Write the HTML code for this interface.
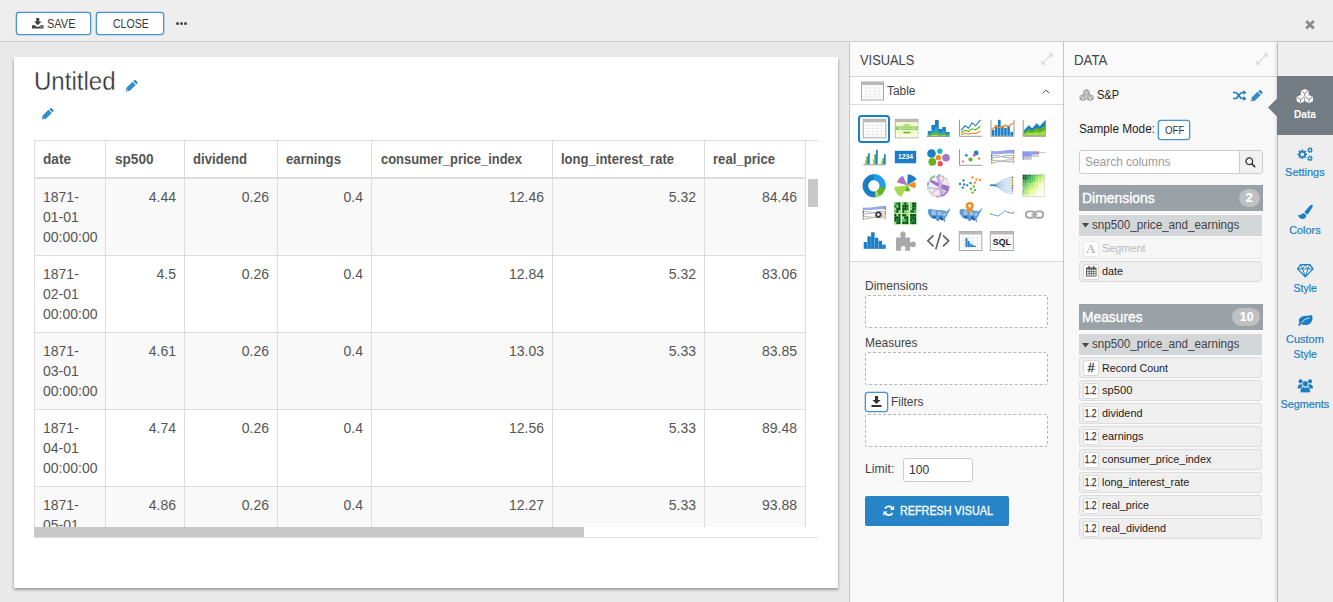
<!DOCTYPE html>
<html lang="en">
<head>
<meta charset="utf-8">
<title>Untitled</title>
<style>
*{box-sizing:border-box;margin:0;padding:0}
html,body{width:1333px;height:602px;overflow:hidden}
body{font-family:"Liberation Sans",sans-serif;font-size:13px;color:#333;background:#e9e9e9;position:relative}
.t{position:absolute;white-space:pre;display:block}
.b{position:absolute;display:block}
svg{position:absolute;display:block;overflow:visible}
#topbar{position:absolute;left:0;top:0;width:1333px;height:42px;background:#eeeeee;border-bottom:1px solid #cdcdcd}
.btn{position:absolute;border:1px solid #4693d0;border-radius:3px;background:#fff;box-shadow:0 0 0 .3px #4693d0}
#card{position:absolute;left:14px;top:57px;width:824px;height:531px;background:#fff;box-shadow:0 1.5px 3px rgba(0,0,0,.42)}
.panel{position:absolute;top:42px;height:560px;background:#f8f8f8;border-left:1px solid #c6c6c6}
.phead{position:absolute;left:0;top:0;width:213px;height:35px;background:#fafafa;border-bottom:1px solid #d6d6d6}
.drop{position:absolute;left:865px;width:183px;background:#fff;border:1px dashed #b5b5b5;border-radius:3px}
.sec{position:absolute;left:1079px;width:184px;height:26px;background:#9aa1a7}
.grp{position:absolute;left:1079px;width:183px;height:20.5px;background:#d3d7da}
.item{position:absolute;left:1079px;width:183px;height:21px;background:#efefef;border:1px solid #dcdcdc;border-radius:3px}
.ibox{position:absolute;left:1083px;width:16px;height:16.5px;background:#fff;border:1px solid #d8d8d8;border-radius:2px}
.pill{position:absolute;height:18px;border-radius:9px;background:#bfc0c0}
</style>
</head>
<body>

<div id="topbar"></div>
<div class="btn" style="left:16px;top:12px;width:75px;height:23px"></div>
<div class="btn" style="left:96px;top:12px;width:68px;height:23px"></div>
<svg style="left:32px;top:18px" width="11.5" height="10.5" viewBox="0 0 23 21"><path fill="#404040" d="M8.5 0h6v7h4.5l-7.5 7.5L4 7h4.5zM0 14.5h6l3 3h5l3-3h6V21H0z"/><rect x="15.5" y="17" width="2" height="1.6" fill="#fff"/><rect x="19" y="17" width="2" height="1.6" fill="#fff"/></svg>
<span class="t" style="left:46.50px;top:18px;font-size:12px;line-height:12px;color:#3a3a3a;transform:scaleX(0.9156);transform-origin:0 0;">SAVE</span>
<span class="t" style="left:112.50px;top:18px;font-size:12px;line-height:12px;color:#3a3a3a;transform:scaleX(0.8775);transform-origin:0 0;">CLOSE</span>
<div class="b" style="left:175.8px;top:22px;width:3.2px;height:3.2px;border-radius:50%;background:#444"></div>
<div class="b" style="left:180.0px;top:22px;width:3.2px;height:3.2px;border-radius:50%;background:#444"></div>
<div class="b" style="left:184.2px;top:22px;width:3.2px;height:3.2px;border-radius:50%;background:#444"></div>
<svg style="left:1304.5px;top:20px" width="10" height="9.5" viewBox="0 0 10 10"><path d="M1 1L9 9M9 1L1 9" stroke="#8c8c8c" stroke-width="2.900"/></svg>
<div id="card"></div>
<span class="t" style="left:33.60px;top:69px;font-size:25px;line-height:25px;color:#333;transform:scaleX(0.9615);transform-origin:0 0;-webkit-text-stroke:.28px #fff;">Untitled</span>
<svg style="left:125.6px;top:80px" width="11.5" height="11.5" viewBox="0 0 11 11"><path fill="#1b7fc5" d="M0 11l.6-3.6L6.300 1.700l3 3L3.600 10.400zM7 1l1-.8a.9.9 0 0 1 1.200 0L10.800 1.800a.9.9 0 0 1 0 1.200l-.8 1z"/><path d="M1.700 8.300L7.300 2.700M2.700 9.300L8.300 3.700" stroke="#fff" stroke-width=".45" opacity=".55"/><path d="M.95 8.500L2.500 10.050 .75 10.300z" fill="#fff" opacity=".7"/></svg>
<svg style="left:41.9px;top:108px" width="11.5" height="11.5" viewBox="0 0 11 11"><path fill="#1b7fc5" d="M0 11l.6-3.6L6.300 1.700l3 3L3.600 10.400zM7 1l1-.8a.9.9 0 0 1 1.200 0L10.800 1.800a.9.9 0 0 1 0 1.200l-.8 1z"/><path d="M1.700 8.300L7.300 2.700M2.700 9.300L8.300 3.700" stroke="#fff" stroke-width=".45" opacity=".55"/><path d="M.95 8.500L2.500 10.050 .75 10.300z" fill="#fff" opacity=".7"/></svg>
<div class="b" style="left:34px;top:140px;width:784px;height:1px;background:#ddd"></div>
<div class="b" style="left:34px;top:177px;width:772px;height:2px;background:#ddd"></div>
<div class="b" style="left:34px;top:179px;width:784px;height:348px;overflow:hidden">
<div class="b" style="left:0;top:0px;width:772px;height:76px;background:#f9f9f9"></div>
<div class="b" style="left:0;top:76px;width:774px;height:1px;background:#ddd"></div>
<span class="t" style="left:9.00px;top:11px;font-size:14px;line-height:14px;color:#555;">1871-</span>
<span class="t" style="left:9.00px;top:31px;font-size:14px;line-height:14px;color:#555;">01-01</span>
<span class="t" style="left:9.00px;top:51px;font-size:14px;line-height:14px;color:#555;">00:00:00</span>
<span class="t" style="left:114.75px;top:11px;font-size:14px;line-height:14px;color:#555;">4.44</span>
<span class="t" style="left:207.75px;top:11px;font-size:14px;line-height:14px;color:#555;">0.26</span>
<span class="t" style="left:309.54px;top:11px;font-size:14px;line-height:14px;color:#555;">0.4</span>
<span class="t" style="left:474.97px;top:11px;font-size:14px;line-height:14px;color:#555;">12.46</span>
<span class="t" style="left:634.75px;top:11px;font-size:14px;line-height:14px;color:#555;">5.32</span>
<span class="t" style="left:727.97px;top:11px;font-size:14px;line-height:14px;color:#555;">84.46</span>
<div class="b" style="left:0;top:77px;width:772px;height:76px;background:#fff"></div>
<div class="b" style="left:0;top:153px;width:774px;height:1px;background:#ddd"></div>
<span class="t" style="left:9.00px;top:88px;font-size:14px;line-height:14px;color:#555;">1871-</span>
<span class="t" style="left:9.00px;top:108px;font-size:14px;line-height:14px;color:#555;">02-01</span>
<span class="t" style="left:9.00px;top:128px;font-size:14px;line-height:14px;color:#555;">00:00:00</span>
<span class="t" style="left:122.54px;top:88px;font-size:14px;line-height:14px;color:#555;">4.5</span>
<span class="t" style="left:207.75px;top:88px;font-size:14px;line-height:14px;color:#555;">0.26</span>
<span class="t" style="left:309.54px;top:88px;font-size:14px;line-height:14px;color:#555;">0.4</span>
<span class="t" style="left:474.97px;top:88px;font-size:14px;line-height:14px;color:#555;">12.84</span>
<span class="t" style="left:634.75px;top:88px;font-size:14px;line-height:14px;color:#555;">5.32</span>
<span class="t" style="left:727.97px;top:88px;font-size:14px;line-height:14px;color:#555;">83.06</span>
<div class="b" style="left:0;top:154px;width:772px;height:76px;background:#f9f9f9"></div>
<div class="b" style="left:0;top:230px;width:774px;height:1px;background:#ddd"></div>
<span class="t" style="left:9.00px;top:165px;font-size:14px;line-height:14px;color:#555;">1871-</span>
<span class="t" style="left:9.00px;top:185px;font-size:14px;line-height:14px;color:#555;">03-01</span>
<span class="t" style="left:9.00px;top:205px;font-size:14px;line-height:14px;color:#555;">00:00:00</span>
<span class="t" style="left:114.75px;top:165px;font-size:14px;line-height:14px;color:#555;">4.61</span>
<span class="t" style="left:207.75px;top:165px;font-size:14px;line-height:14px;color:#555;">0.26</span>
<span class="t" style="left:309.54px;top:165px;font-size:14px;line-height:14px;color:#555;">0.4</span>
<span class="t" style="left:474.97px;top:165px;font-size:14px;line-height:14px;color:#555;">13.03</span>
<span class="t" style="left:634.75px;top:165px;font-size:14px;line-height:14px;color:#555;">5.33</span>
<span class="t" style="left:727.97px;top:165px;font-size:14px;line-height:14px;color:#555;">83.85</span>
<div class="b" style="left:0;top:231px;width:772px;height:76px;background:#fff"></div>
<div class="b" style="left:0;top:307px;width:774px;height:1px;background:#ddd"></div>
<span class="t" style="left:9.00px;top:242px;font-size:14px;line-height:14px;color:#555;">1871-</span>
<span class="t" style="left:9.00px;top:262px;font-size:14px;line-height:14px;color:#555;">04-01</span>
<span class="t" style="left:9.00px;top:282px;font-size:14px;line-height:14px;color:#555;">00:00:00</span>
<span class="t" style="left:114.75px;top:242px;font-size:14px;line-height:14px;color:#555;">4.74</span>
<span class="t" style="left:207.75px;top:242px;font-size:14px;line-height:14px;color:#555;">0.26</span>
<span class="t" style="left:309.54px;top:242px;font-size:14px;line-height:14px;color:#555;">0.4</span>
<span class="t" style="left:474.97px;top:242px;font-size:14px;line-height:14px;color:#555;">12.56</span>
<span class="t" style="left:634.75px;top:242px;font-size:14px;line-height:14px;color:#555;">5.33</span>
<span class="t" style="left:727.97px;top:242px;font-size:14px;line-height:14px;color:#555;">89.48</span>
<div class="b" style="left:0;top:308px;width:772px;height:76px;background:#f9f9f9"></div>
<div class="b" style="left:0;top:384px;width:774px;height:1px;background:#ddd"></div>
<span class="t" style="left:9.00px;top:319px;font-size:14px;line-height:14px;color:#555;">1871-</span>
<span class="t" style="left:9.00px;top:339px;font-size:14px;line-height:14px;color:#555;">05-01</span>
<span class="t" style="left:9.00px;top:359px;font-size:14px;line-height:14px;color:#555;">00:00:00</span>
<span class="t" style="left:114.75px;top:319px;font-size:14px;line-height:14px;color:#555;">4.86</span>
<span class="t" style="left:207.75px;top:319px;font-size:14px;line-height:14px;color:#555;">0.26</span>
<span class="t" style="left:309.54px;top:319px;font-size:14px;line-height:14px;color:#555;">0.4</span>
<span class="t" style="left:474.97px;top:319px;font-size:14px;line-height:14px;color:#555;">12.27</span>
<span class="t" style="left:634.75px;top:319px;font-size:14px;line-height:14px;color:#555;">5.33</span>
<span class="t" style="left:727.97px;top:319px;font-size:14px;line-height:14px;color:#555;">93.88</span>
</div>
<div class="b" style="left:34px;top:140px;width:1px;height:387px;background:#ddd"></div>
<div class="b" style="left:105px;top:140px;width:1px;height:387px;background:#ddd"></div>
<div class="b" style="left:184px;top:140px;width:1px;height:387px;background:#ddd"></div>
<div class="b" style="left:277px;top:140px;width:1px;height:387px;background:#ddd"></div>
<div class="b" style="left:371px;top:140px;width:1px;height:387px;background:#ddd"></div>
<div class="b" style="left:552px;top:140px;width:1px;height:387px;background:#ddd"></div>
<div class="b" style="left:704px;top:140px;width:1px;height:387px;background:#ddd"></div>
<div class="b" style="left:805px;top:140px;width:1px;height:387px;background:#ddd"></div>
<span class="t" style="left:43.30px;top:152px;font-size:14px;line-height:14px;color:#555;font-weight:700;transform:scaleX(0.9726);transform-origin:0 0;">date</span>
<span class="t" style="left:115.20px;top:152px;font-size:14px;line-height:14px;color:#555;font-weight:700;transform:scaleX(0.9698);transform-origin:0 0;">sp500</span>
<span class="t" style="left:193.30px;top:152px;font-size:14px;line-height:14px;color:#555;font-weight:700;transform:scaleX(0.9382);transform-origin:0 0;">dividend</span>
<span class="t" style="left:286.30px;top:152px;font-size:14px;line-height:14px;color:#555;font-weight:700;transform:scaleX(0.9425);transform-origin:0 0;">earnings</span>
<span class="t" style="left:381.00px;top:152px;font-size:14px;line-height:14px;color:#555;font-weight:700;transform:scaleX(0.9245);transform-origin:0 0;">consumer_price_index</span>
<span class="t" style="left:561.30px;top:152px;font-size:14px;line-height:14px;color:#555;font-weight:700;transform:scaleX(0.9310);transform-origin:0 0;">long_interest_rate</span>
<span class="t" style="left:713.30px;top:152px;font-size:14px;line-height:14px;color:#555;font-weight:700;transform:scaleX(0.9371);transform-origin:0 0;">real_price</span>
<div class="b" style="left:806px;top:179px;width:12px;height:348px;background:#fff"></div>
<div class="b" style="left:808px;top:179px;width:10px;height:28px;background:#c8c8c8"></div>
<div class="b" style="left:34px;top:527px;width:784px;height:10px;background:#fff"></div>
<div class="b" style="left:34px;top:527px;width:549.5px;height:10px;background:#c8c8c8"></div>
<div class="b" style="left:34px;top:537px;width:784px;height:1px;background:#ddd"></div>
<div class="panel" style="left:849px;width:215px"><div class="phead"></div></div>
<div class="b" style="left:850px;top:77px;width:213px;height:184px;background:#fff"></div>
<div class="b" style="left:850px;top:104px;width:213px;height:1px;background:#dcdcdc"></div>
<div class="b" style="left:850px;top:261px;width:213px;height:1px;background:#d6d6d6"></div>
<span class="t" style="left:859.80px;top:53px;font-size:14px;line-height:14px;color:#444;transform:scaleX(0.9182);transform-origin:0 0;">VISUALS</span>
<svg style="left:1041px;top:53px" width="12" height="12" viewBox="0 0 12 12"><path d="M2 10L10 2" stroke="#dadada" stroke-width="1.100" fill="none"/><path fill="#dadada" d="M7.200 .3H11.700v4.500zM.3 7.200V11.700h4.500z"/></svg>
<svg style="left:0;top:0" width="1333" height="602" viewBox="0 0 1333 602"><g transform="translate(861.5,82)"><rect x="0" y="0" width="22" height="18" fill="#fff" stroke="#a8a8a8" stroke-width="1"/><rect x="0" y="0" width="22" height="3" fill="#b9b9b9"/><path d="M1 6.00H21" stroke="#e3e3e3" stroke-width=".6"/><path d="M1 9.00H21" stroke="#e3e3e3" stroke-width=".6"/><path d="M1 12.00H21" stroke="#e3e3e3" stroke-width=".6"/><path d="M1 15.00H21" stroke="#e3e3e3" stroke-width=".6"/><path d="M4.40 3V17.5" stroke="#e3e3e3" stroke-width=".6"/><path d="M8.80 3V17.5" stroke="#e3e3e3" stroke-width=".6"/><path d="M13.20 3V17.5" stroke="#e3e3e3" stroke-width=".6"/><path d="M17.60 3V17.5" stroke="#e3e3e3" stroke-width=".6"/></g><rect x="859" y="116" width="30" height="26" rx="2.5" fill="#fff" stroke="#1b7fc5" stroke-width="2"/><g transform="translate(863.3,119.3)"><rect x="0" y="0" width="22.5" height="18.5" fill="#fff" stroke="#a8a8a8" stroke-width="1"/><rect x="0" y="0" width="22.5" height="3" fill="#b9b9b9"/><path d="M1 6.10H21.5" stroke="#e3e3e3" stroke-width=".6"/><path d="M1 9.20H21.5" stroke="#e3e3e3" stroke-width=".6"/><path d="M1 12.30H21.5" stroke="#e3e3e3" stroke-width=".6"/><path d="M1 15.40H21.5" stroke="#e3e3e3" stroke-width=".6"/><path d="M4.50 3V18.0" stroke="#e3e3e3" stroke-width=".6"/><path d="M9.00 3V18.0" stroke="#e3e3e3" stroke-width=".6"/><path d="M13.50 3V18.0" stroke="#e3e3e3" stroke-width=".6"/><path d="M18.00 3V18.0" stroke="#e3e3e3" stroke-width=".6"/></g><g transform="translate(895.3,119.3)"><rect width="22.500" height="18.5" fill="#fff" stroke="#a8a8a8"/><rect width="22.500" height="3" fill="#b9b9b9"/><rect x=".5" y="3.2" width="22" height="3.600" fill="#f7f9c8"/><rect x=".5" y="7" width="22" height="4" fill="#8fd16a"/><rect x=".5" y="11.200" width="22" height="3.600" fill="#f7f9c8"/><rect x=".5" y="15" width="22" height="3" fill="#fbfce0"/><rect x="8" y="5" width="7" height="1.500" fill="#a6dc4b"/><rect x="8" y="12.500" width="7" height="1.500" fill="#62b51f"/><rect x="3" y="8.300" width="17" height="1.300" fill="#b9e58a"/><path d="M4.500 3V18M18.500 3V18" stroke="#e4e4e4" stroke-width=".7"/></g><g transform="translate(927,120)"><rect x="0.8" y="11" width="3.700" height="5" fill="#1b7fc5"/><rect x="0.8" y="13.25" width="3.700" height="1.25" fill="#1ea0ef"/><rect x="0.8" y="14.50" width="3.700" height="1.00" fill="#62b51f"/><rect x="0.8" y="15.50" width="3.700" height="0.50" fill="#a6dc4b"/><rect x="4.4" y="5" width="3.700" height="11" fill="#1b7fc5"/><rect x="4.4" y="9.95" width="3.700" height="2.75" fill="#1ea0ef"/><rect x="4.4" y="12.70" width="3.700" height="2.20" fill="#62b51f"/><rect x="4.4" y="14.90" width="3.700" height="1.10" fill="#a6dc4b"/><rect x="8" y="0" width="3.700" height="16" fill="#1b7fc5"/><rect x="8" y="7.20" width="3.700" height="4.00" fill="#1ea0ef"/><rect x="8" y="11.20" width="3.700" height="3.20" fill="#62b51f"/><rect x="8" y="14.40" width="3.700" height="1.60" fill="#a6dc4b"/><rect x="11.6" y="9" width="3.700" height="7" fill="#1b7fc5"/><rect x="11.6" y="12.15" width="3.700" height="1.75" fill="#1ea0ef"/><rect x="11.6" y="13.90" width="3.700" height="1.40" fill="#62b51f"/><rect x="11.6" y="15.30" width="3.700" height="0.70" fill="#a6dc4b"/><rect x="15.2" y="7" width="3.700" height="9" fill="#1b7fc5"/><rect x="15.2" y="11.05" width="3.700" height="2.25" fill="#1ea0ef"/><rect x="15.2" y="13.30" width="3.700" height="1.80" fill="#62b51f"/><rect x="15.2" y="15.10" width="3.700" height="0.90" fill="#a6dc4b"/><rect x="18.8" y="12" width="3.700" height="4" fill="#1b7fc5"/><rect x="18.8" y="13.80" width="3.700" height="1.00" fill="#1ea0ef"/><rect x="18.8" y="14.80" width="3.700" height="0.80" fill="#62b51f"/><rect x="18.8" y="15.60" width="3.700" height="0.40" fill="#a6dc4b"/><path d="M0 16.500H23" stroke="#9a9a9a" stroke-width="1"/></g><g transform="translate(959,119.8)" fill="none"><path d="M.5 0V16.500H23" stroke="#9a9a9a" stroke-width="1"/><path d="M2 10.500L6 6l3.500 2.500L13 3l3.500 3L21.500 0" stroke="#1b7fc5" stroke-width="1.100"/><path d="M2 13l4-2.500 3.500 1L13 9l3.500 1 5-3.500" stroke="#62b51f" stroke-width="1.100"/><path d="M2 15l4-1.500 3.500.8L13 13.200l3.500.600 5-2.300" stroke="#f68b1f" stroke-width="1.100"/></g><g transform="translate(990.5,119.8)"><path d="M.5 0V16.500H23.500V0" stroke="#9a9a9a" stroke-width="1" fill="none"/><rect x="1.30" y="10" width="2.600" height="6" fill="#1b7fc5"/><rect x="4.40" y="5.5" width="2.600" height="10.5" fill="#1b7fc5"/><rect x="7.50" y="0" width="2.600" height="16" fill="#1b7fc5"/><rect x="10.60" y="6" width="2.600" height="10" fill="#1b7fc5"/><rect x="13.70" y="8" width="2.600" height="8" fill="#1b7fc5"/><rect x="16.80" y="6.5" width="2.600" height="9.5" fill="#1b7fc5"/><rect x="19.90" y="12" width="2.600" height="4" fill="#1b7fc5"/><path d="M1 9.500l5-3 4 1.500 5-2.500 3 1L23 3" stroke="#f68b1f" stroke-width="1.300" fill="none"/></g><g transform="translate(1022.7,119.8)"><path d="M1 16V11l5-5.500 3.500 3L14 3.500l3 3L23 0V16z" fill="#1b7fc5"/><path d="M1 16v-3l5-3.500 3.500 1.500 4.500-3 3 1.500 6-4V16z" fill="#62b51f"/><path d="M1 16v-1.500l5-2 3.500 1 4.500-1.500 3 1 6-2.500V16z" fill="#a6dc4b"/><path d="M.5 0V16.500H23.300" stroke="#9a9a9a" stroke-width="1" fill="none"/></g><g transform="translate(863.3,149.8)"><rect x="1.5" y="10.5" width="1.500" height="4.0" fill="#a6dc4b"/><rect x="3.0" y="6.5" width="1.700" height="8" fill="#62b51f"/><rect x="4.7" y="3.5" width="1.700" height="11" fill="#1b7fc5"/><rect x="9.5" y="9.5" width="1.500" height="5.0" fill="#a6dc4b"/><rect x="11.0" y="4.5" width="1.700" height="10" fill="#62b51f"/><rect x="12.7" y="0.0" width="1.700" height="14.5" fill="#1b7fc5"/><rect x="17.5" y="11.5" width="1.500" height="3.0" fill="#a6dc4b"/><rect x="19.0" y="8.5" width="1.700" height="6" fill="#62b51f"/><rect x="20.7" y="4.5" width="1.700" height="10" fill="#1b7fc5"/><path d="M0 15H22.500" stroke="#9a9a9a" stroke-width="1"/></g><rect x="894.800" y="150.800" width="21.400" height="12.500" fill="#1b7fc5"/><text x="905.500" y="159.400" font-family="Liberation Sans, sans-serif" font-size="6.800" font-weight="700" fill="#fff" text-anchor="middle">1234</text><circle cx="931.5" cy="153.5" r="4.3" fill="#1b7fc5"/><circle cx="939.8" cy="151.3" r="2.7" fill="#19b5cb"/><circle cx="946" cy="157.7" r="3.8" fill="#a974c9"/><circle cx="938.3" cy="157.7" r="2.7" fill="#f68b1f"/><circle cx="932.3" cy="161.8" r="3.9" fill="#62b51f"/><circle cx="940.2" cy="163.7" r="2.6" fill="#ee4d5a"/><path d="M959.500 149.300V165.300H982" stroke="#9a9a9a" stroke-width="1" fill="none"/><circle cx="966.3" cy="155.3" r="1.5" fill="#1ea0ef"/><circle cx="976.2" cy="153" r="2.4" fill="#1b7fc5"/><circle cx="974.3" cy="155" r="1.7" fill="#a974c9"/><circle cx="970.5" cy="159.5" r="2.1" fill="#62b51f"/><circle cx="979" cy="158.5" r="1.2" fill="#f68b1f"/><circle cx="963" cy="161.5" r="1" fill="#ee4d5a"/><g transform="translate(991,149.3)"><path d="M0 1.500C8 3 15 0 23 .5V4C15 4 8 5.500 0 4.500z" fill="#9aa5ee"/><g stroke="#b5b5b5" stroke-width="1.100" fill="none"><path d="M1 6C9 6 14 9 22 8.500"/><path d="M1 8.500C9 8 14 5.500 22 6"/><path d="M1 11C9 11 14 13 22 12.500"/><path d="M1 13.500C9 13 14 10 22 10.500"/></g><rect x="0" y="5" width="1.300" height="3" fill="#1b7fc5"/><rect x="0" y="8.500" width="1.300" height="3" fill="#62b51f"/><rect x="0" y="12" width="1.300" height="2.500" fill="#f68b1f"/><rect x="22" y="1" width="1.300" height="3.500" fill="#62b51f"/><rect x="22" y="5.500" width="1.300" height="4" fill="#f68b1f"/><rect x="22" y="10" width="1.300" height="4" fill="#bbb"/></g><g transform="translate(1022.7,151.3)"><rect x="0" y="0" width="16" height="5.500" fill="#8d9cf0"/><rect x="0" y="5.500" width="9" height="3" fill="#c9c9c9"/><rect x="9" y="3" width="7" height="2.500" fill="#d6d6d6"/><path d="M16 1.300H23" stroke="#bbb" stroke-width=".9"/><rect x="15.300" y=".3" width="1.200" height="2" fill="#f68b1f"/><rect x="0" y="0" width="1" height="8.500" fill="#7b8be0"/></g><circle cx="874" cy="185.8" r="8.650" fill="none" stroke="#1b7fc5" stroke-width="5.700"/><circle cx="874" cy="185.8" r="7.300" fill="none" stroke="#1670b3" stroke-width="1.200" opacity=".55"/><path fill="#1ea0ef" d="M874.00 174.30A11.5 11.5 0 0 1 885.33 187.80L879.71 186.81A5.8 5.8 0 0 0 874.00 180.00Z"/><path fill="#62b51f" d="M885.33 187.80A11.5 11.5 0 0 1 879.75 195.76L876.90 190.82A5.8 5.8 0 0 0 879.71 186.81Z"/><path fill="#a6dc4b" d="M879.75 195.76A11.5 11.5 0 0 1 875.60 197.19L874.81 191.54A5.8 5.8 0 0 0 876.90 190.82Z"/><path fill="#1b7fc5" d="M907.68 174.21A11 11 0 0 1 916.63 179.37L907.31 185.19A0.01 0.01 0 0 0 907.30 185.19Z"/><path fill="#f68b1f" d="M914.94 181.47A8.5 8.5 0 0 1 915.18 188.38L907.31 185.20A0.01 0.01 0 0 0 907.31 185.20Z"/><path fill="#a974c9" d="M897.16 182.48A10.5 10.5 0 0 1 902.86 175.68L907.30 185.19A0.01 0.01 0 0 0 907.29 185.20Z"/><path fill="#a6dc4b" d="M901.26 197.05A13.3 13.3 0 0 1 894.13 187.05L907.29 185.20A0.01 0.01 0 0 0 907.30 185.21Z"/><path fill="#62b51f" d="M910.40 190.57A6.2 6.2 0 0 1 904.68 190.82L907.30 185.21A0.01 0.01 0 0 0 907.30 185.21Z"/><circle cx="938.3" cy="186" r="10.200" fill="#f1ecf6"/><path d="M930.500 179.500C936 182 942 184.500 948.500 186L948 192C942 189 935 185 929.500 181.500z" fill="#8e5fb8" opacity=".85"/><path d="M936 176C938 182 940 189 940 196.500L944 195.500C943 189 941 182 939 176z" fill="#b89ad6" opacity=".8"/><path d="M944 177.500C942 184 937 190 931 193.500" stroke="#d4c2e6" stroke-width="1.800" fill="none"/><path d="M928 188C934 188 942 190 946 193" stroke="#cdb8e2" stroke-width="1.500" fill="none"/><path fill="#7cc77c" d="M929.24 178.92A11.5 11.5 0 0 1 934.75 175.06L935.33 176.87A9.6 9.6 0 0 0 930.74 180.09Z"/><path fill="#7db5e6" d="M937.70 174.52A11.5 11.5 0 0 1 941.08 174.84L940.62 176.69A9.6 9.6 0 0 0 937.80 176.41Z"/><path fill="#f6a34a" d="M942.23 175.19A11.5 11.5 0 0 1 944.05 176.04L943.10 177.69A9.6 9.6 0 0 0 941.58 176.98Z"/><path fill="#bfe6b0" d="M945.06 176.70A11.5 11.5 0 0 1 948.45 180.60L946.78 181.49A9.6 9.6 0 0 0 943.94 178.23Z"/><path fill="#f7cfd6" d="M948.96 181.69A11.5 11.5 0 0 1 949.77 185.20L947.88 185.33A9.6 9.6 0 0 0 947.20 182.40Z"/><path fill="#a884d0" d="M949.80 186.00A11.5 11.5 0 0 1 941.28 197.11L940.78 195.27A9.6 9.6 0 0 0 947.90 186.00Z"/><path fill="#c9a9a0" d="M940.30 197.33A11.5 11.5 0 0 1 935.91 197.25L936.30 195.39A9.6 9.6 0 0 0 939.97 195.45Z"/><path fill="#f3c1d9" d="M935.13 197.05A11.5 11.5 0 0 1 930.60 194.55L931.88 193.13A9.6 9.6 0 0 0 935.65 195.23Z"/><path fill="#d9e69a" d="M930.03 193.99A11.5 11.5 0 0 1 927.79 190.68L929.53 189.90A9.6 9.6 0 0 0 931.39 192.67Z"/><path fill="#9fdcec" d="M927.49 189.93A11.5 11.5 0 0 1 926.83 186.80L928.72 186.67A9.6 9.6 0 0 0 929.28 189.28Z"/><path fill="#7db5e6" d="M926.80 186.00A11.5 11.5 0 0 1 927.64 181.69L929.40 182.40A9.6 9.6 0 0 0 928.70 186.00Z"/><path fill="#d9d9d9" d="M927.96 180.96A11.5 11.5 0 0 1 928.88 179.40L930.44 180.49A9.6 9.6 0 0 0 929.67 181.79Z"/><path d="M963.500 180.500L964.200 184.500 960 184M964.200 184.500L967.200 185.300 970.500 183.200 972.400 177.500M970.500 183.200L974.900 182.700 976.400 179.500 979.900 180M970.500 183.200L973.700 186.500 971 188.900M973.700 186.500L974.900 190.200 972.400 192.600M964.200 184.500L962.800 187.700" stroke="#d5e0ea" stroke-width=".5" fill="none"/><circle cx="963.5" cy="180.5" r="1.150" fill="#1b7fc5"/><circle cx="960" cy="184" r="1.150" fill="#1b7fc5"/><circle cx="964.2" cy="184.5" r="1.150" fill="#1b7fc5"/><circle cx="967.2" cy="185.3" r="1.150" fill="#1b7fc5"/><circle cx="962.8" cy="187.7" r="1.150" fill="#1b7fc5"/><circle cx="970.5" cy="183.2" r="1.150" fill="#1b7fc5"/><circle cx="972.4" cy="177.5" r="1.150" fill="#f68b1f"/><circle cx="976.4" cy="179.5" r="1.150" fill="#f68b1f"/><circle cx="979.9" cy="180" r="1.150" fill="#f68b1f"/><circle cx="974.9" cy="182.7" r="1.150" fill="#f68b1f"/><circle cx="973.7" cy="186.5" r="1.150" fill="#62b51f"/><circle cx="971" cy="188.9" r="1.150" fill="#62b51f"/><circle cx="974.9" cy="190.2" r="1.150" fill="#62b51f"/><circle cx="972.4" cy="192.6" r="1.150" fill="#62b51f"/><g fill="none" stroke="#3f8fd0" stroke-width=".45" opacity=".75"><path d="M990 185.3C1000 185.3 1001 177.30 1012 177.30"/><path d="M990 185.3C1000 185.3 1001 178.92 1012 178.92"/><path d="M990 185.3C1000 185.3 1001 180.54 1012 180.54"/><path d="M990 185.3C1000 185.3 1001 182.16 1012 182.16"/><path d="M990 185.3C1000 185.3 1001 183.78 1012 183.78"/><path d="M990 185.3C1000 185.3 1001 185.40 1012 185.40"/><path d="M990 185.3C1000 185.3 1001 187.02 1012 187.02"/><path d="M990 185.3C1000 185.3 1001 188.64 1012 188.64"/><path d="M990 185.3C1000 185.3 1001 190.26 1012 190.26"/><path d="M990 185.3C1000 185.3 1001 191.88 1012 191.88"/><path d="M990 185.3C1000 185.3 1001 193.50 1012 193.50"/></g><path d="M990 185.3h6" stroke="#1b7fc5" stroke-width="1.100"/><rect x="1011.8" y="176.60" width="1.300" height="1.400" fill="#1b7fc5"/><rect x="1011.8" y="178.22" width="1.300" height="1.400" fill="#f68b1f"/><rect x="1011.8" y="179.84" width="1.300" height="1.400" fill="#f68b1f"/><rect x="1011.8" y="181.46" width="1.300" height="1.400" fill="#62b51f"/><rect x="1011.8" y="183.08" width="1.300" height="1.400" fill="#a6dc4b"/><rect x="1011.8" y="184.70" width="1.300" height="1.400" fill="#ee4d5a"/><rect x="1011.8" y="186.32" width="1.300" height="1.400" fill="#ee4d5a"/><rect x="1011.8" y="187.94" width="1.300" height="1.400" fill="#a974c9"/><rect x="1011.8" y="189.56" width="1.300" height="1.400" fill="#a974c9"/><rect x="1011.8" y="191.18" width="1.300" height="1.400" fill="#ccc"/><rect x="1011.8" y="192.80" width="1.300" height="1.400" fill="#ccc"/><g transform="translate(1022.4,174.6)"><rect width="22" height="22" fill="#fff"/><rect x="0.00" y="0.00" width="2.23" height="2.23" fill="#0b4f24"/><rect x="2.20" y="0.00" width="2.23" height="2.23" fill="#0c5225"/><rect x="4.40" y="0.00" width="2.23" height="2.23" fill="#239341"/><rect x="6.60" y="0.00" width="2.23" height="2.23" fill="#1c873c"/><rect x="8.80" y="0.00" width="2.23" height="2.23" fill="#46b656"/><rect x="11.00" y="0.00" width="2.23" height="2.23" fill="#53c15d"/><rect x="13.20" y="0.00" width="2.23" height="2.23" fill="#5ac35e"/><rect x="15.40" y="0.00" width="2.23" height="2.23" fill="#99dd6e"/><rect x="17.60" y="0.00" width="2.23" height="2.23" fill="#94db6d"/><rect x="19.80" y="0.00" width="2.23" height="2.23" fill="#c4ee6f"/><rect x="0.00" y="2.20" width="2.23" height="2.23" fill="#0b4f24"/><rect x="2.20" y="2.20" width="2.23" height="2.23" fill="#136b30"/><rect x="4.40" y="2.20" width="2.23" height="2.23" fill="#2c9c47"/><rect x="6.60" y="2.20" width="2.23" height="2.23" fill="#58c35e"/><rect x="8.80" y="2.20" width="2.23" height="2.23" fill="#45b556"/><rect x="11.00" y="2.20" width="2.23" height="2.23" fill="#67c862"/><rect x="13.20" y="2.20" width="2.23" height="2.23" fill="#a0e06e"/><rect x="15.40" y="2.20" width="2.23" height="2.23" fill="#c9f072"/><rect x="17.60" y="2.20" width="2.23" height="2.23" fill="#caf074"/><rect x="19.80" y="2.20" width="2.23" height="2.23" fill="#d1f280"/><rect x="0.00" y="4.40" width="2.23" height="2.23" fill="#34a44b"/><rect x="2.20" y="4.40" width="2.23" height="2.23" fill="#1c863b"/><rect x="4.40" y="4.40" width="2.23" height="2.23" fill="#5bc35f"/><rect x="6.60" y="4.40" width="2.23" height="2.23" fill="#4ebe5b"/><rect x="8.80" y="4.40" width="2.23" height="2.23" fill="#61c660"/><rect x="11.00" y="4.40" width="2.23" height="2.23" fill="#7cd267"/><rect x="13.20" y="4.40" width="2.23" height="2.23" fill="#a4e26e"/><rect x="15.40" y="4.40" width="2.23" height="2.23" fill="#d2f281"/><rect x="17.60" y="4.40" width="2.23" height="2.23" fill="#caf074"/><rect x="19.80" y="4.40" width="2.23" height="2.23" fill="#e4f8a1"/><rect x="0.00" y="6.60" width="2.23" height="2.23" fill="#37a74d"/><rect x="2.20" y="6.60" width="2.23" height="2.23" fill="#3eae51"/><rect x="4.40" y="6.60" width="2.23" height="2.23" fill="#61c660"/><rect x="6.60" y="6.60" width="2.23" height="2.23" fill="#5ac35f"/><rect x="8.80" y="6.60" width="2.23" height="2.23" fill="#78d066"/><rect x="11.00" y="6.60" width="2.23" height="2.23" fill="#9edf6e"/><rect x="13.20" y="6.60" width="2.23" height="2.23" fill="#cdf17a"/><rect x="15.40" y="6.60" width="2.23" height="2.23" fill="#d2f382"/><rect x="17.60" y="6.60" width="2.23" height="2.23" fill="#dbf592"/><rect x="19.80" y="6.60" width="2.23" height="2.23" fill="#ebf9b8"/><rect x="0.00" y="8.80" width="2.23" height="2.23" fill="#42b254"/><rect x="2.20" y="8.80" width="2.23" height="2.23" fill="#4ebe5b"/><rect x="4.40" y="8.80" width="2.23" height="2.23" fill="#92da6d"/><rect x="6.60" y="8.80" width="2.23" height="2.23" fill="#a4e26e"/><rect x="8.80" y="8.80" width="2.23" height="2.23" fill="#a1e06e"/><rect x="11.00" y="8.80" width="2.23" height="2.23" fill="#caf074"/><rect x="13.20" y="8.80" width="2.23" height="2.23" fill="#d5f387"/><rect x="15.40" y="8.80" width="2.23" height="2.23" fill="#e9f9b2"/><rect x="17.60" y="8.80" width="2.23" height="2.23" fill="#edfac0"/><rect x="19.80" y="8.80" width="2.23" height="2.23" fill="#ecfabe"/><rect x="0.00" y="11.00" width="2.23" height="2.23" fill="#82d469"/><rect x="2.20" y="11.00" width="2.23" height="2.23" fill="#5fc560"/><rect x="4.40" y="11.00" width="2.23" height="2.23" fill="#93db6d"/><rect x="6.60" y="11.00" width="2.23" height="2.23" fill="#bfec6f"/><rect x="8.80" y="11.00" width="2.23" height="2.23" fill="#b3e76f"/><rect x="11.00" y="11.00" width="2.23" height="2.23" fill="#d4f385"/><rect x="13.20" y="11.00" width="2.23" height="2.23" fill="#d2f382"/><rect x="15.40" y="11.00" width="2.23" height="2.23" fill="#ecfabd"/><rect x="17.60" y="11.00" width="2.23" height="2.23" fill="#f4fcd7"/><rect x="19.80" y="11.00" width="2.23" height="2.23" fill="#f5fcdc"/><rect x="0.00" y="13.20" width="2.23" height="2.23" fill="#97dc6e"/><rect x="2.20" y="13.20" width="2.23" height="2.23" fill="#8bd86b"/><rect x="4.40" y="13.20" width="2.23" height="2.23" fill="#bceb6f"/><rect x="6.60" y="13.20" width="2.23" height="2.23" fill="#cbf075"/><rect x="8.80" y="13.20" width="2.23" height="2.23" fill="#d7f48a"/><rect x="11.00" y="13.20" width="2.23" height="2.23" fill="#e0f699"/><rect x="13.20" y="13.20" width="2.23" height="2.23" fill="#effac7"/><rect x="15.40" y="13.20" width="2.23" height="2.23" fill="#f5fcdb"/><rect x="17.60" y="13.20" width="2.23" height="2.23" fill="#f5fcd9"/><rect x="19.80" y="13.20" width="2.23" height="2.23" fill="#f8fde7"/><rect x="0.00" y="15.40" width="2.23" height="2.23" fill="#78d066"/><rect x="2.20" y="15.40" width="2.23" height="2.23" fill="#bceb6f"/><rect x="4.40" y="15.40" width="2.23" height="2.23" fill="#ccf178"/><rect x="6.60" y="15.40" width="2.23" height="2.23" fill="#e4f8a1"/><rect x="8.80" y="15.40" width="2.23" height="2.23" fill="#e8f9af"/><rect x="11.00" y="15.40" width="2.23" height="2.23" fill="#e6f8a6"/><rect x="13.20" y="15.40" width="2.23" height="2.23" fill="#eefac3"/><rect x="15.40" y="15.40" width="2.23" height="2.23" fill="#f6fcde"/><rect x="17.60" y="15.40" width="2.23" height="2.23" fill="#f4fcd8"/><rect x="19.80" y="15.40" width="2.23" height="2.23" fill="#f9fdeb"/><rect x="0.00" y="17.60" width="2.23" height="2.23" fill="#9cde6e"/><rect x="2.20" y="17.60" width="2.23" height="2.23" fill="#b1e76f"/><rect x="4.40" y="17.60" width="2.23" height="2.23" fill="#c5ee6f"/><rect x="6.60" y="17.60" width="2.23" height="2.23" fill="#e7f8ab"/><rect x="8.80" y="17.60" width="2.23" height="2.23" fill="#e2f79d"/><rect x="11.00" y="17.60" width="2.23" height="2.23" fill="#ecfabb"/><rect x="13.20" y="17.60" width="2.23" height="2.23" fill="#f4fcd8"/><rect x="15.40" y="17.60" width="2.23" height="2.23" fill="#f9fdec"/><rect x="17.60" y="17.60" width="2.23" height="2.23" fill="#f7fce3"/><rect x="19.80" y="17.60" width="2.23" height="2.23" fill="#fcfef4"/><rect x="0.00" y="19.80" width="2.23" height="2.23" fill="#c9f072"/><rect x="2.20" y="19.80" width="2.23" height="2.23" fill="#e1f79b"/><rect x="4.40" y="19.80" width="2.23" height="2.23" fill="#e8f9ae"/><rect x="6.60" y="19.80" width="2.23" height="2.23" fill="#f0fbc8"/><rect x="8.80" y="19.80" width="2.23" height="2.23" fill="#ecfabd"/><rect x="11.00" y="19.80" width="2.23" height="2.23" fill="#f4fcd8"/><rect x="13.20" y="19.80" width="2.23" height="2.23" fill="#f6fce0"/><rect x="15.40" y="19.80" width="2.23" height="2.23" fill="#fcfef5"/><rect x="17.60" y="19.80" width="2.23" height="2.23" fill="#ffffff"/><rect x="19.80" y="19.80" width="2.23" height="2.23" fill="#fcfef6"/><rect width="22" height="22" fill="none" stroke="#d2d2cc" stroke-width=".7"/></g><g transform="translate(862.7,205.5)"><path d="M0 2C8 3 15 0 23 .5V3.500C15 3.500 8 5 0 4.500z" fill="#9aa5ee"/><g stroke="#b5b5b5" stroke-width="1.100" fill="none"><path d="M1 6C9 6 14 9 22 8.500"/><path d="M1 8.500C9 8 14 5.500 22 6"/><path d="M1 11C9 11 14 13 22 12.500"/><path d="M1 13.500C9 13 14 10 22 10.500"/></g><rect x="0" y="5" width="1.300" height="3" fill="#1b7fc5"/><rect x="0" y="8.500" width="1.300" height="3" fill="#62b51f"/><rect x="0" y="12" width="1.300" height="2.500" fill="#f68b1f"/><rect x="22" y="1" width="1.300" height="3.500" fill="#62b51f"/><rect x="22" y="5.500" width="1.300" height="4" fill="#f68b1f"/><rect x="22" y="10" width="1.300" height="4" fill="#bbb"/><circle cx="15.7" cy="9.1" r="2.100" fill="#fff" stroke="#3a3a3a" stroke-width="1.500"/><path d="M18.01 10.06L18.93 10.44" stroke="#3a3a3a" stroke-width="1.200"/><path d="M16.66 11.41L17.04 12.33" stroke="#3a3a3a" stroke-width="1.200"/><path d="M14.74 11.41L14.36 12.33" stroke="#3a3a3a" stroke-width="1.200"/><path d="M13.39 10.06L12.47 10.44" stroke="#3a3a3a" stroke-width="1.200"/><path d="M13.39 8.14L12.47 7.76" stroke="#3a3a3a" stroke-width="1.200"/><path d="M14.74 6.79L14.36 5.87" stroke="#3a3a3a" stroke-width="1.200"/><path d="M16.66 6.79L17.04 5.87" stroke="#3a3a3a" stroke-width="1.200"/><path d="M18.01 8.14L18.93 7.76" stroke="#3a3a3a" stroke-width="1.200"/></g><g transform="translate(894.4,202.4)"><rect width="22" height="22" fill="#eef6a6"/><rect x="0.0" y="0.0" width="6.100" height="10.500" fill="#3aa655"/><rect x="0.15" y="0.25" width="1.750" height="2.100" fill="#6cc76a"/><rect x="2.15" y="0.25" width="1.750" height="2.100" fill="#1c7a36"/><rect x="4.15" y="0.25" width="1.750" height="2.100" fill="#123f1d"/><rect x="0.15" y="2.85" width="1.750" height="2.100" fill="#1c7a36"/><rect x="2.15" y="2.85" width="1.750" height="2.100" fill="#bfe88a"/><rect x="4.15" y="2.85" width="1.750" height="2.100" fill="#123f1d"/><rect x="0.15" y="5.45" width="1.750" height="2.100" fill="#bfe88a"/><rect x="2.15" y="5.45" width="1.750" height="2.100" fill="#123f1d"/><rect x="4.15" y="5.45" width="1.750" height="2.100" fill="#123f1d"/><rect x="0.15" y="8.05" width="1.750" height="2.100" fill="#6cc76a"/><rect x="2.15" y="8.05" width="1.750" height="2.100" fill="#0a3d1a"/><rect x="4.15" y="8.05" width="1.750" height="2.100" fill="#bfe88a"/><rect x="0.0" y="11.4" width="6.100" height="10.500" fill="#3aa655"/><rect x="0.15" y="11.65" width="1.750" height="2.100" fill="#0a3d1a"/><rect x="2.15" y="11.65" width="1.750" height="2.100" fill="#bfe88a"/><rect x="4.15" y="11.65" width="1.750" height="2.100" fill="#0d4f22"/><rect x="0.15" y="14.25" width="1.750" height="2.100" fill="#123f1d"/><rect x="2.15" y="14.25" width="1.750" height="2.100" fill="#0a3d1a"/><rect x="4.15" y="14.25" width="1.750" height="2.100" fill="#0d4f22"/><rect x="0.15" y="16.85" width="1.750" height="2.100" fill="#0a3d1a"/><rect x="2.15" y="16.85" width="1.750" height="2.100" fill="#1c7a36"/><rect x="4.15" y="16.85" width="1.750" height="2.100" fill="#0a3d1a"/><rect x="0.15" y="19.45" width="1.750" height="2.100" fill="#bfe88a"/><rect x="2.15" y="19.45" width="1.750" height="2.100" fill="#0d4f22"/><rect x="4.15" y="19.45" width="1.750" height="2.100" fill="#0a3d1a"/><rect x="7.9" y="0.0" width="6.100" height="10.500" fill="#3aa655"/><rect x="8.05" y="0.25" width="1.750" height="2.100" fill="#6cc76a"/><rect x="10.05" y="0.25" width="1.750" height="2.100" fill="#0a3d1a"/><rect x="12.05" y="0.25" width="1.750" height="2.100" fill="#6cc76a"/><rect x="8.05" y="2.85" width="1.750" height="2.100" fill="#0d4f22"/><rect x="10.05" y="2.85" width="1.750" height="2.100" fill="#0a3d1a"/><rect x="12.05" y="2.85" width="1.750" height="2.100" fill="#123f1d"/><rect x="8.05" y="5.45" width="1.750" height="2.100" fill="#0d4f22"/><rect x="10.05" y="5.45" width="1.750" height="2.100" fill="#0a3d1a"/><rect x="12.05" y="5.45" width="1.750" height="2.100" fill="#1c7a36"/><rect x="8.05" y="8.05" width="1.750" height="2.100" fill="#0d4f22"/><rect x="10.05" y="8.05" width="1.750" height="2.100" fill="#bfe88a"/><rect x="12.05" y="8.05" width="1.750" height="2.100" fill="#bfe88a"/><rect x="7.9" y="11.4" width="6.100" height="10.500" fill="#3aa655"/><rect x="8.05" y="11.65" width="1.750" height="2.100" fill="#0a3d1a"/><rect x="10.05" y="11.65" width="1.750" height="2.100" fill="#0d4f22"/><rect x="12.05" y="11.65" width="1.750" height="2.100" fill="#bfe88a"/><rect x="8.05" y="14.25" width="1.750" height="2.100" fill="#bfe88a"/><rect x="10.05" y="14.25" width="1.750" height="2.100" fill="#0a3d1a"/><rect x="12.05" y="14.25" width="1.750" height="2.100" fill="#0d4f22"/><rect x="8.05" y="16.85" width="1.750" height="2.100" fill="#6cc76a"/><rect x="10.05" y="16.85" width="1.750" height="2.100" fill="#6cc76a"/><rect x="12.05" y="16.85" width="1.750" height="2.100" fill="#0a3d1a"/><rect x="8.05" y="19.45" width="1.750" height="2.100" fill="#0d4f22"/><rect x="10.05" y="19.45" width="1.750" height="2.100" fill="#0d4f22"/><rect x="12.05" y="19.45" width="1.750" height="2.100" fill="#0a3d1a"/><rect x="15.8" y="0.0" width="6.100" height="10.500" fill="#3aa655"/><rect x="15.95" y="0.25" width="1.750" height="2.100" fill="#bfe88a"/><rect x="17.95" y="0.25" width="1.750" height="2.100" fill="#0a3d1a"/><rect x="19.95" y="0.25" width="1.750" height="2.100" fill="#0d4f22"/><rect x="15.95" y="2.85" width="1.750" height="2.100" fill="#bfe88a"/><rect x="17.95" y="2.85" width="1.750" height="2.100" fill="#0d4f22"/><rect x="19.95" y="2.85" width="1.750" height="2.100" fill="#0d4f22"/><rect x="15.95" y="5.45" width="1.750" height="2.100" fill="#bfe88a"/><rect x="17.95" y="5.45" width="1.750" height="2.100" fill="#0d4f22"/><rect x="19.95" y="5.45" width="1.750" height="2.100" fill="#1c7a36"/><rect x="15.95" y="8.05" width="1.750" height="2.100" fill="#1c7a36"/><rect x="17.95" y="8.05" width="1.750" height="2.100" fill="#0d4f22"/><rect x="19.95" y="8.05" width="1.750" height="2.100" fill="#6cc76a"/><rect x="15.8" y="11.4" width="6.100" height="10.500" fill="#3aa655"/><rect x="15.95" y="11.65" width="1.750" height="2.100" fill="#123f1d"/><rect x="17.95" y="11.65" width="1.750" height="2.100" fill="#123f1d"/><rect x="19.95" y="11.65" width="1.750" height="2.100" fill="#0d4f22"/><rect x="15.95" y="14.25" width="1.750" height="2.100" fill="#0d4f22"/><rect x="17.95" y="14.25" width="1.750" height="2.100" fill="#123f1d"/><rect x="19.95" y="14.25" width="1.750" height="2.100" fill="#0d4f22"/><rect x="15.95" y="16.85" width="1.750" height="2.100" fill="#0a3d1a"/><rect x="17.95" y="16.85" width="1.750" height="2.100" fill="#1c7a36"/><rect x="19.95" y="16.85" width="1.750" height="2.100" fill="#0a3d1a"/><rect x="15.95" y="19.45" width="1.750" height="2.100" fill="#1c7a36"/><rect x="17.95" y="19.45" width="1.750" height="2.100" fill="#0a3d1a"/><rect x="19.95" y="19.45" width="1.750" height="2.100" fill="#0d4f22"/></g><g transform="translate(927.5,207.300)"><path d="M.5 2.5L3 1.500 6 2.200 10 2.800 14 2.800 16.500 3.800 18 3.200 19 4.500 21 2.500 22.300 .8 22.500 2.500 21.300 4.800 20 6.500 19.500 8.500 18 10 17.300 12 18 14.500 17 14.800 15.800 12.500 14 12 12 12.500 11 14 9.500 13.800 8 11.500 6 11.500 3.500 10.500 1.500 8 .3 5z" fill="#5b9bd5"/><path d="M4 3l4 .5 .5 4-4 .5zM10 4h4v4h-4zM15 6l3-1 .5 3-3 1.500z" fill="#9cc3e6"/><path d="M12 9l3 .5-.5 2.500h-2.500zM5 8.500l3 .3v2.500l-2.500-.3z" fill="#1f5fa8"/><path d="M13.500 11.500l2 .3.3 1.500-1.800-.3z" fill="#0b3c7d"/></g><g transform="translate(959.2,207.300)"><path d="M.5 2.5L3 1.500 6 2.200 10 2.800 14 2.800 16.500 3.800 18 3.200 19 4.500 21 2.500 22.300 .8 22.500 2.500 21.300 4.800 20 6.500 19.500 8.500 18 10 17.300 12 18 14.500 17 14.800 15.800 12.500 14 12 12 12.500 11 14 9.500 13.800 8 11.500 6 11.500 3.500 10.500 1.500 8 .3 5z" fill="#5b9bd5"/><path d="M4 3l4 .5 .5 4-4 .5zM10 4h4v4h-4zM15 6l3-1 .5 3-3 1.500z" fill="#9cc3e6"/><path d="M12 9l3 .5-.5 2.500h-2.500zM5 8.500l3 .3v2.500l-2.500-.3z" fill="#1f5fa8"/><path d="M13.500 11.500l2 .3.3 1.500-1.800-.3z" fill="#0b3c7d"/></g><path d="M969.700 213.400C967 209.500 965.700 208 965.700 205.900a4 4 0 0 1 8 0c0 2.100-1.300 3.600-4 7.500z" fill="#f68b1f"/><circle cx="969.700" cy="205.800" r="1.600" fill="#fff"/><path d="M990.800 213.900l1.500.8 1.200-.2 1.500.9 1.300.1 1.200.6 1.400-.5 1.300-.9 1.200-.5 1.300-1.400 1.300-1.500 1.200-.4 1.200.9 1.400.2 1.200.7 1.300.1 1.200.8 1-1.300" stroke="#4f9fdc" stroke-width="1" fill="none"/><rect x="990" y="213" width="1.800" height="1.800" fill="#a6dc4b"/><rect x="1012.400" y="211.900" width="1.600" height="1.800" fill="#f68b1f"/><g fill="none" stroke="#a6a6a6" stroke-width="1.900"><rect x="1026" y="211.400" width="8.300" height="6.300" rx="2.800"/><rect x="1034.700" y="211.400" width="8.300" height="6.300" rx="2.800"/></g><path d="M1031.500 214.550h6" stroke="#a6a6a6" stroke-width="1.900"/><g transform="translate(863.7,232)"><rect x="0.00" y="10.0" width="3.500" height="6.3" fill="#1b7fc5"/><rect x="3.70" y="4.300000000000001" width="3.500" height="12" fill="#1b7fc5"/><rect x="7.40" y="0.3000000000000007" width="3.500" height="16" fill="#1b7fc5"/><rect x="11.10" y="5.800000000000001" width="3.500" height="10.5" fill="#1b7fc5"/><rect x="14.80" y="8.8" width="3.500" height="7.5" fill="#1b7fc5"/><rect x="18.50" y="12.600000000000001" width="3.500" height="3.7" fill="#1b7fc5"/><path d="M0 16.300H22.200" stroke="#1b7fc5" stroke-width=".9"/></g><path fill="#a9a9a9" d="M896 237.500h4.300c.8 0 .7-.9.300-1.600-1.100-2 .2-4.400 2.400-4.400s3.500 2.400 2.400 4.400c-.4.700-.5 1.600.3 1.600h4.300v4.200c0 .8.900.7 1.600.3 2-1.100 4.400.2 4.400 2.400s-2.400 3.500-4.400 2.400c-.7-.4-1.600-.5-1.600.3v3.700h-4.300c-.8 0-.9-.7-.5-1.400.9-1.600-.2-3.400-2-3.400s-2.900 1.800-2 3.400c.4.700.3 1.400-.5 1.400H896z"/><g fill="none" stroke="#5e5e5e" stroke-width="1.600"><path d="M933.500 235.300L927.800 240.800 933.500 246.300"/><path d="M943 235.300L948.700 240.800 943 246.300"/><path d="M940.800 232.500L935.800 249.200"/></g><g transform="translate(959.3,231.5)"><rect x="0" y="0" width="22.5" height="19" fill="#fff" stroke="#a8a8a8" stroke-width="1"/><rect x="0" y="0" width="22.5" height="3" fill="#b9b9b9"/><path d="M1 6.20H21.5" stroke="#e3e3e3" stroke-width=".6"/><path d="M1 9.40H21.5" stroke="#e3e3e3" stroke-width=".6"/><path d="M1 12.60H21.5" stroke="#e3e3e3" stroke-width=".6"/><path d="M1 15.80H21.5" stroke="#e3e3e3" stroke-width=".6"/><path d="M4.50 3V18.5" stroke="#e3e3e3" stroke-width=".6"/><path d="M9.00 3V18.5" stroke="#e3e3e3" stroke-width=".6"/><path d="M13.50 3V18.5" stroke="#e3e3e3" stroke-width=".6"/><path d="M18.00 3V18.5" stroke="#e3e3e3" stroke-width=".6"/></g><rect x="965.50" y="238" width="1.900" height="9" fill="#1b7fc5"/><rect x="967.60" y="241" width="1.900" height="6" fill="#1b7fc5"/><rect x="969.70" y="243.5" width="1.900" height="3.5" fill="#1b7fc5"/><rect x="971.80" y="245" width="1.900" height="2" fill="#1b7fc5"/><rect x="973.90" y="245.8" width="1.900" height="1.2" fill="#1b7fc5"/><g transform="translate(990.3,231.5)"><rect x="0" y="0" width="23" height="19" fill="#fff" stroke="#a8a8a8" stroke-width="1"/><rect x="0" y="0" width="23" height="3" fill="#b9b9b9"/><path d="M1 6.20H22" stroke="#e3e3e3" stroke-width=".6"/><path d="M1 9.40H22" stroke="#e3e3e3" stroke-width=".6"/><path d="M1 12.60H22" stroke="#e3e3e3" stroke-width=".6"/><path d="M1 15.80H22" stroke="#e3e3e3" stroke-width=".6"/><path d="M4.60 3V18.5" stroke="#e3e3e3" stroke-width=".6"/><path d="M9.20 3V18.5" stroke="#e3e3e3" stroke-width=".6"/><path d="M13.80 3V18.5" stroke="#e3e3e3" stroke-width=".6"/><path d="M18.40 3V18.5" stroke="#e3e3e3" stroke-width=".6"/></g><text x="1001.800" y="244.700" font-family="Liberation Sans, sans-serif" font-size="9.500" font-weight="700" fill="#222" text-anchor="middle" textLength="18" lengthAdjust="spacingAndGlyphs">SQL</text></svg>
<span class="t" style="left:887.40px;top:85px;font-size:12.5px;line-height:12.5px;color:#444;transform:scaleX(0.9537);transform-origin:0 0;">Table</span>
<svg style="left:1042px;top:89px" width="8" height="5" viewBox="0 0 8 5"><path d="M.7 4.400L4 1l3.300 3.400" stroke="#5a5a5a" stroke-width="1" fill="none"/></svg>
<span class="t" style="left:865.10px;top:279px;font-size:13px;line-height:13px;color:#444;transform:scaleX(0.9247);transform-origin:0 0;">Dimensions</span>
<div class="drop" style="top:294.5px;height:33.5px"></div>
<span class="t" style="left:865.10px;top:336px;font-size:13px;line-height:13px;color:#444;transform:scaleX(0.9198);transform-origin:0 0;">Measures</span>
<div class="drop" style="top:351.5px;height:33.5px"></div>
<div class="btn" style="left:865px;top:391.5px;width:23px;height:20.5px"></div>
<svg style="left:871px;top:396px" width="11" height="11" viewBox="0 0 11 11"><path fill="#333" d="M4 0h3v4h2.6L5.5 8 1.400 4H4zM.5 9h10v2H.5z"/></svg>
<span class="t" style="left:891.20px;top:395px;font-size:13px;line-height:13px;color:#444;transform:scaleX(0.9155);transform-origin:0 0;">Filters</span>
<div class="drop" style="top:414px;height:32.5px"></div>
<span class="t" style="left:865.10px;top:462px;font-size:13px;line-height:13px;color:#444;transform:scaleX(0.9433);transform-origin:0 0;">Limit:</span>
<div class="b" style="left:903px;top:458px;width:70px;height:23.5px;background:#fff;border:1px solid #ccc;border-radius:3px"></div>
<span class="t" style="left:909.00px;top:463px;font-size:13px;line-height:13px;color:#333;transform:scaleX(0.9359);transform-origin:0 0;">100</span>
<div class="b" style="left:865px;top:495.5px;width:144px;height:30px;background:#2785c7;border-radius:2px"></div>
<svg style="left:883px;top:505px" width="11.5" height="11.5" viewBox="0 0 12 12"><path d="M10.3 4.6A4.6 4.6 0 0 0 2 3.600M1.700 7.400A4.600 4.600 0 0 0 10 8.400" stroke="#fff" stroke-width="1.7" fill="none"/><path fill="#fff" d="M11.600 .8v4.500H7.100zM.4 11.200V6.700h4.500z"/></svg>
<span class="t" style="left:899.70px;top:504px;font-size:13px;line-height:13px;color:#fff;transform:scaleX(0.8305);transform-origin:0 0;-webkit-text-stroke:.3px #fff;">REFRESH VISUAL</span>
<div class="panel" style="left:1063px;width:214px"><div class="phead"></div></div>
<span class="t" style="left:1074.40px;top:53px;font-size:14px;line-height:14px;color:#444;transform:scaleX(0.9472);transform-origin:0 0;">DATA</span>
<svg style="left:1255.5px;top:53px" width="12" height="12" viewBox="0 0 12 12"><path d="M2 10L10 2" stroke="#dadada" stroke-width="1.100" fill="none"/><path fill="#dadada" d="M7.200 .3H11.700v4.500zM.3 7.200V11.700h4.500z"/></svg>
<svg style="left:1078.8px;top:89px" width="15.2" height="12.46" viewBox="0 0 17.500 14.300"><path fill="#a6a6a6" d="M8.75 -0.09999999999999964L12.64 1.87V6.13L8.75 8.1L4.86 6.13V1.87Z"/><path fill="none" stroke="#f8f8f8" stroke-width=".9" d="M5.76 2.37L8.75 4.30L11.74 2.37M8.75 4.30V7.30"/><path fill="#a6a6a6" d="M4.5 6.0L8.39 7.97V12.23L4.5 14.2L0.61 12.23V7.97Z"/><path fill="none" stroke="#f8f8f8" stroke-width=".9" d="M1.51 8.47L4.5 10.40L7.49 8.47M4.5 10.40V13.40"/><path fill="#a6a6a6" d="M13.0 6.0L16.89 7.97V12.23L13.0 14.2L9.11 12.23V7.97Z"/><path fill="none" stroke="#f8f8f8" stroke-width=".9" d="M10.01 8.47L13.0 10.40L15.99 8.47M13.0 10.40V13.40"/></svg>
<span class="t" style="left:1097.20px;top:89px;font-size:12px;line-height:12px;color:#222;transform:scaleX(0.9203);transform-origin:0 0;">S&amp;P</span>
<svg style="left:1233px;top:90px" width="13.500" height="11" viewBox="0 0 13.500 11"><g fill="none" stroke="#1b7fc5" stroke-width="1.700"><path d="M0 2.500h2.300C5.500 2.500 6 8.500 9.300 8.500h1.500"/><path d="M0 8.500h2.300C5.500 8.500 6 2.500 9.300 2.500h1.500"/></g><path fill="#1b7fc5" d="M10.300 0l3.200 2.500-3.200 2.500zM10.300 6l3.200 2.500-3.200 2.500z"/></svg>
<svg style="left:1251.2px;top:90px" width="11.5" height="11.5" viewBox="0 0 11 11"><path fill="#1b7fc5" d="M0 11l.6-3.6L6.300 1.700l3 3L3.600 10.400zM7 1l1-.8a.9.9 0 0 1 1.200 0L10.800 1.800a.9.9 0 0 1 0 1.200l-.8 1z"/><path d="M1.700 8.300L7.300 2.700M2.700 9.300L8.300 3.700" stroke="#f8f8f8" stroke-width=".45" opacity=".55"/><path d="M.95 8.500L2.500 10.050 .75 10.300z" fill="#f8f8f8" opacity=".7"/></svg>
<span class="t" style="left:1079.00px;top:123px;font-size:12.5px;line-height:12.5px;color:#222;transform:scaleX(0.9429);transform-origin:0 0;">Sample Mode:</span>
<div class="btn" style="left:1158px;top:120px;width:32px;height:20px"></div>
<span class="t" style="left:1164.50px;top:125px;font-size:11px;line-height:11px;color:#333;transform:scaleX(0.8866);transform-origin:0 0;">OFF</span>
<div class="b" style="left:1079px;top:150px;width:184px;height:24px;background:#fff;border:1px solid #ccc;border-radius:3px"></div>
<div class="b" style="left:1238.5px;top:151px;width:23.500px;height:22px;background:#f1f1f1;border-left:1px solid #ccc;border-radius:0 2px 2px 0"></div>
<span class="t" style="left:1084.80px;top:155px;font-size:13px;line-height:13px;color:#9a9a9a;transform:scaleX(0.9173);transform-origin:0 0;">Search columns</span>
<svg style="left:1245px;top:156.500px" width="10.500" height="10.500" viewBox="0 0 12 12"><circle cx="4.900" cy="4.900" r="3.800" stroke="#333" stroke-width="1.500" fill="none"/><path d="M7.800 7.800L11 11" stroke="#333" stroke-width="1.900" stroke-linecap="round"/></svg>
<div class="sec" style="top:185px"></div>
<span class="t" style="left:1082.40px;top:191px;font-size:14px;line-height:14px;color:#fff;transform:scaleX(0.9940);transform-origin:0 0;-webkit-text-stroke:.35px #fff;">Dimensions</span>
<div class="pill" style="left:1239px;top:189px;width:21px"></div>
<span class="t" style="left:1246.06px;top:192px;font-size:12px;line-height:12px;color:#fff;font-weight:700;transform:scaleX(1.0488);transform-origin:50% 0;-webkit-text-stroke:.2px #fff;">2</span>
<div class="grp" style="top:215px;height:20.5px"></div>
<svg style="left:1082px;top:223px" width="7" height="4.500" viewBox="0 0 7 4.500"><path fill="#444" d="M0 0h7L3.500 4.500z"/></svg>
<span class="t" style="left:1091.90px;top:219px;font-size:12px;line-height:12px;color:#444;transform:scaleX(0.9732);transform-origin:0 0;">snp500_price_and_earnings</span>
<div class="item" style="top:238px;background:#f6f6f6;border-color:#e9e9e9"></div>
<div class="ibox" style="top:240.5px;border-color:#e6e6e6"></div>
<span class="t" style="left:1086px;top:242px;font-family:'Liberation Serif',serif;font-size:13px;line-height:13px;font-weight:700;color:#bdbdbd">A</span>
<span class="t" style="left:1101.90px;top:243px;font-size:11px;line-height:11px;color:#b9b9b9;transform:scaleX(0.9880);transform-origin:0 0;">Segment</span>
<div class="item" style="top:261px"></div>
<div class="ibox" style="top:263.5px"></div>
<svg style="left:1086px;top:266px" width="10.500" height="10.500" viewBox="0 0 10.500 10.500"><path fill="#555" d="M0 1.500h10.500v9H0z"/><path fill="#555" d="M2.200 0h1.500v2.500H2.200zM6.800 0h1.500v2.500H6.800z"/><path fill="#fff" d="M.9 3.600h8.700v6H.9z"/><path stroke="#555" stroke-width=".75" d="M.9 5.600h8.700M.9 7.600h8.700M3.100 3.600v6M5.250 3.600v6M7.400 3.600v6"/></svg>
<span class="t" style="left:1101.90px;top:266px;font-size:11px;line-height:11px;color:#222;transform:scaleX(0.9809);transform-origin:0 0;">date</span>
<div class="sec" style="top:304px"></div>
<span class="t" style="left:1082.40px;top:310px;font-size:14px;line-height:14px;color:#fff;transform:scaleX(0.9858);transform-origin:0 0;-webkit-text-stroke:.35px #fff;">Measures</span>
<div class="pill" style="left:1232px;top:308px;width:28px"></div>
<span class="t" style="left:1239.53px;top:311px;font-size:12px;line-height:12px;color:#fff;font-weight:700;transform:scaleX(1.0189);transform-origin:50% 0;-webkit-text-stroke:.2px #fff;">10</span>
<div class="grp" style="top:334px;height:21px"></div>
<svg style="left:1082px;top:342.5px" width="7" height="4.500" viewBox="0 0 7 4.500"><path fill="#444" d="M0 0h7L3.500 4.500z"/></svg>
<span class="t" style="left:1091.90px;top:338px;font-size:12px;line-height:12px;color:#444;transform:scaleX(0.9732);transform-origin:0 0;">snp500_price_and_earnings</span>
<div class="item" style="top:357px"></div>
<div class="ibox" style="top:359.5px"></div>
<span class="t" style="left:1087.66px;top:362px;font-size:12px;line-height:12px;color:#333;-webkit-text-stroke:.3px #333;">#</span>
<span class="t" style="left:1101.90px;top:363px;font-size:11px;line-height:11px;color:#222;transform:scaleX(0.9724);transform-origin:0 0;">Record Count</span>
<div class="item" style="top:380px"></div>
<div class="ibox" style="top:382.5px"></div>
<span class="t" style="left:1083.35px;top:385px;font-size:11px;line-height:11px;color:#333;transform:scaleX(0.7717);transform-origin:50% 0;-webkit-text-stroke:.25px #333;">1.2</span>
<span class="t" style="left:1101.90px;top:385px;font-size:11px;line-height:11px;color:#222;transform:scaleX(1.0176);transform-origin:0 0;">sp500</span>
<div class="item" style="top:403px"></div>
<div class="ibox" style="top:405.5px"></div>
<span class="t" style="left:1083.35px;top:408px;font-size:11px;line-height:11px;color:#333;transform:scaleX(0.7717);transform-origin:50% 0;-webkit-text-stroke:.25px #333;">1.2</span>
<span class="t" style="left:1101.90px;top:408px;font-size:11px;line-height:11px;color:#222;transform:scaleX(0.9883);transform-origin:0 0;">dividend</span>
<div class="item" style="top:426px"></div>
<div class="ibox" style="top:428.5px"></div>
<span class="t" style="left:1083.35px;top:431px;font-size:11px;line-height:11px;color:#333;transform:scaleX(0.7717);transform-origin:50% 0;-webkit-text-stroke:.25px #333;">1.2</span>
<span class="t" style="left:1101.90px;top:431px;font-size:11px;line-height:11px;color:#222;transform:scaleX(0.9835);transform-origin:0 0;">earnings</span>
<div class="item" style="top:449px"></div>
<div class="ibox" style="top:451.5px"></div>
<span class="t" style="left:1083.35px;top:454px;font-size:11px;line-height:11px;color:#333;transform:scaleX(0.7717);transform-origin:50% 0;-webkit-text-stroke:.25px #333;">1.2</span>
<span class="t" style="left:1101.90px;top:454px;font-size:11px;line-height:11px;color:#222;transform:scaleX(0.9885);transform-origin:0 0;">consumer_price_index</span>
<div class="item" style="top:472px"></div>
<div class="ibox" style="top:474.5px"></div>
<span class="t" style="left:1083.35px;top:477px;font-size:11px;line-height:11px;color:#333;transform:scaleX(0.7717);transform-origin:50% 0;-webkit-text-stroke:.25px #333;">1.2</span>
<span class="t" style="left:1101.90px;top:477px;font-size:11px;line-height:11px;color:#222;transform:scaleX(0.9913);transform-origin:0 0;">long_interest_rate</span>
<div class="item" style="top:495px"></div>
<div class="ibox" style="top:497.5px"></div>
<span class="t" style="left:1083.35px;top:500px;font-size:11px;line-height:11px;color:#333;transform:scaleX(0.7717);transform-origin:50% 0;-webkit-text-stroke:.25px #333;">1.2</span>
<span class="t" style="left:1101.90px;top:500px;font-size:11px;line-height:11px;color:#222;transform:scaleX(0.9730);transform-origin:0 0;">real_price</span>
<div class="item" style="top:518px"></div>
<div class="ibox" style="top:520.5px"></div>
<span class="t" style="left:1083.35px;top:523px;font-size:11px;line-height:11px;color:#333;transform:scaleX(0.7717);transform-origin:50% 0;-webkit-text-stroke:.25px #333;">1.2</span>
<span class="t" style="left:1101.90px;top:523px;font-size:11px;line-height:11px;color:#222;transform:scaleX(0.9780);transform-origin:0 0;">real_dividend</span>
<div class="b" style="left:1277px;top:42px;width:56px;height:560px;background:#eeeeee;border-left:1px solid #bcbcbc;box-shadow:-1px 0 3px rgba(0,0,0,.13)"></div>
<div class="b" style="left:1277px;top:76px;width:56px;height:58.500px;background:#747c83"></div>
<svg style="left:1268px;top:97.500px" width="9.500" height="19" viewBox="0 0 9.500 19"><path fill="#747c83" d="M9.500 0v19L0 9.500z"/></svg>
<svg style="left:1295.5px;top:89px" width="17.5" height="14.35" viewBox="0 0 17.500 14.300"><path fill="#fff" d="M8.75 -0.09999999999999964L12.64 1.87V6.13L8.75 8.1L4.86 6.13V1.87Z"/><path fill="none" stroke="#747c83" stroke-width=".9" d="M5.76 2.37L8.75 4.30L11.74 2.37M8.75 4.30V7.30"/><path fill="#fff" d="M4.5 6.0L8.39 7.97V12.23L4.5 14.2L0.61 12.23V7.97Z"/><path fill="none" stroke="#747c83" stroke-width=".9" d="M1.51 8.47L4.5 10.40L7.49 8.47M4.5 10.40V13.40"/><path fill="#fff" d="M13.0 6.0L16.89 7.97V12.23L13.0 14.2L9.11 12.23V7.97Z"/><path fill="none" stroke="#747c83" stroke-width=".9" d="M10.01 8.47L13.0 10.40L15.99 8.47M13.0 10.40V13.40"/></svg>
<span class="t" style="left:1292.58px;top:109px;font-size:11px;line-height:11px;color:#fff;font-weight:700;transform:scaleX(0.9227);transform-origin:50% 0;">Data</span>
<svg style="left:0;top:0" width="1333" height="602" viewBox="0 0 1333 602"><path fill="#1b7fc5" fill-rule="evenodd" d="M1307.03 153.47L1307.03 155.13L1305.80 155.14L1305.37 156.18L1306.23 157.06L1305.06 158.23L1304.18 157.37L1303.14 157.80L1303.13 159.03L1301.47 159.03L1301.46 157.80L1300.42 157.37L1299.54 158.23L1298.37 157.06L1299.23 156.18L1298.80 155.14L1297.57 155.13L1297.57 153.47L1298.80 153.46L1299.23 152.42L1298.37 151.54L1299.54 150.37L1300.42 151.23L1301.46 150.80L1301.47 149.57L1303.13 149.57L1303.14 150.80L1304.18 151.23L1305.06 150.37L1306.23 151.54L1305.37 152.42L1305.80 153.46ZM1304.20 154.30A1.9 1.9 0 1 0 1300.40 154.30A1.9 1.9 0 1 0 1304.20 154.30Z"/><path fill="#1b7fc5" fill-rule="evenodd" d="M1312.84 149.63L1312.84 150.77L1312.02 150.76L1311.70 151.43L1312.22 152.07L1311.33 152.78L1310.83 152.13L1310.09 152.30L1309.92 153.10L1308.81 152.85L1309.00 152.05L1308.42 151.58L1307.68 151.95L1307.19 150.92L1307.93 150.57L1307.93 149.83L1307.19 149.48L1307.68 148.45L1308.42 148.82L1309.00 148.35L1308.81 147.55L1309.92 147.30L1310.09 148.10L1310.83 148.27L1311.33 147.62L1312.22 148.33L1311.70 148.97L1312.02 149.64ZM1311.00 150.20A1.0 1.0 0 1 0 1309.00 150.20A1.0 1.0 0 1 0 1311.00 150.20Z"/><path fill="#1b7fc5" fill-rule="evenodd" d="M1312.84 157.73L1312.84 158.87L1312.02 158.86L1311.70 159.53L1312.22 160.17L1311.33 160.88L1310.83 160.23L1310.09 160.40L1309.92 161.20L1308.81 160.95L1309.00 160.15L1308.42 159.68L1307.68 160.05L1307.19 159.02L1307.93 158.67L1307.93 157.93L1307.19 157.58L1307.68 156.55L1308.42 156.92L1309.00 156.45L1308.81 155.65L1309.92 155.40L1310.09 156.20L1310.83 156.37L1311.33 155.72L1312.22 156.43L1311.70 157.07L1312.02 157.74ZM1311.00 158.30A1.0 1.0 0 1 0 1309.00 158.30A1.0 1.0 0 1 0 1311.00 158.30Z"/><path fill="#1b7fc5" d="M1310.200 205.300Q1311.600 204.200 1312.500 205Q1313.200 205.900 1312.300 207.500L1308.300 213.800Q1307.400 214.800 1306.300 214L1305 213Q1304.200 212.200 1305 211.200Z"/><path fill="#1b7fc5" d="M1303.800 213.300L1306.300 215.200Q1306.200 218.900 1302.200 218.900Q1298.800 218.900 1297.900 214.600Q1299.500 215.600 1300.800 214.800Q1301.600 213.200 1303.800 213.300Z"/><g fill="none" stroke="#1b7fc5" stroke-linejoin="round"><path stroke-width="1.250" d="M1300.700 264.700h9.200l3.100 4.200-7.700 7.900-7.700-7.900z"/><path stroke-width="1" d="M1297.600 268.900h15.400M1302.600 268.900l2.700 7.600 2.700-7.600"/><path stroke-width=".8" d="M1300.700 264.700l1.900 4.200 2.700-4.200 2.700 4.200 1.900-4.200"/></g><path fill="#1b7fc5" d="M1312 314.900c1.200 3.600.3 7.200-2.500 9-2.500 1.600-5.700 1.500-8.600.4l-1.700 1.700-1.200-.9 1.500-2c-1.300-2.300-.5-5 2-6.300 3.200-1.700 7.500-.8 10.500-1.900z"/><path d="M1301.800 322.500c1.800-2.800 4.400-4.200 7.300-4.500" stroke="#eee" stroke-width=".9" fill="none" stroke-linecap="round"/><g fill="#1b7fc5"><circle cx="1300.600" cy="381.300" r="2.100"/><circle cx="1310" cy="381.300" r="2.100"/><path d="M1297.700 387.500c0-2 1.200-3.300 2.900-3.300 1 0 1.600.4 2.100 1-.8.900-1.200 2-1.200 3.300h-3.800zM1312.900 387.500c0-2-1.200-3.300-2.900-3.300-1 0-1.600.4-2.100 1 .8.900 1.200 2 1.200 3.300h3.800z"/><circle cx="1305.300" cy="383.800" r="3.100" stroke="#eee" stroke-width=".7"/><path stroke="#eee" stroke-width=".6" d="M1300.200 391c0-2.700 1.700-4.200 3.300-4.200.6.500 1.100.7 1.800.7s1.200-.2 1.800-.7c1.600 0 3.300 1.500 3.300 4.200 0 1.100-.7 1.700-1.700 1.700h-6.800c-1 0-1.700-.6-1.700-1.700z"/></g></svg>
<span class="t" style="left:1285.33px;top:167px;font-size:11px;line-height:11px;color:#1b7fc5;transform:scaleX(0.9938);transform-origin:50% 0;-webkit-text-stroke:.2px #1b7fc5;">Settings</span>
<span class="t" style="left:1288.81px;top:225px;font-size:11px;line-height:11px;color:#1b7fc5;transform:scaleX(0.9910);transform-origin:50% 0;-webkit-text-stroke:.2px #1b7fc5;">Colors</span>
<span class="t" style="left:1292.97px;top:283px;font-size:11px;line-height:11px;color:#1b7fc5;transform:scaleX(0.9528);transform-origin:50% 0;-webkit-text-stroke:.2px #1b7fc5;">Style</span>
<span class="t" style="left:1286.35px;top:334px;font-size:11px;line-height:11px;color:#1b7fc5;transform:scaleX(0.9947);transform-origin:50% 0;-webkit-text-stroke:.2px #1b7fc5;">Custom</span>
<span class="t" style="left:1292.97px;top:349px;font-size:11px;line-height:11px;color:#1b7fc5;transform:scaleX(0.9528);transform-origin:50% 0;-webkit-text-stroke:.2px #1b7fc5;">Style</span>
<span class="t" style="left:1280.04px;top:399px;font-size:11px;line-height:11px;color:#1b7fc5;transform:scaleX(0.9833);transform-origin:50% 0;-webkit-text-stroke:.2px #1b7fc5;">Segments</span>

</body>
</html>
